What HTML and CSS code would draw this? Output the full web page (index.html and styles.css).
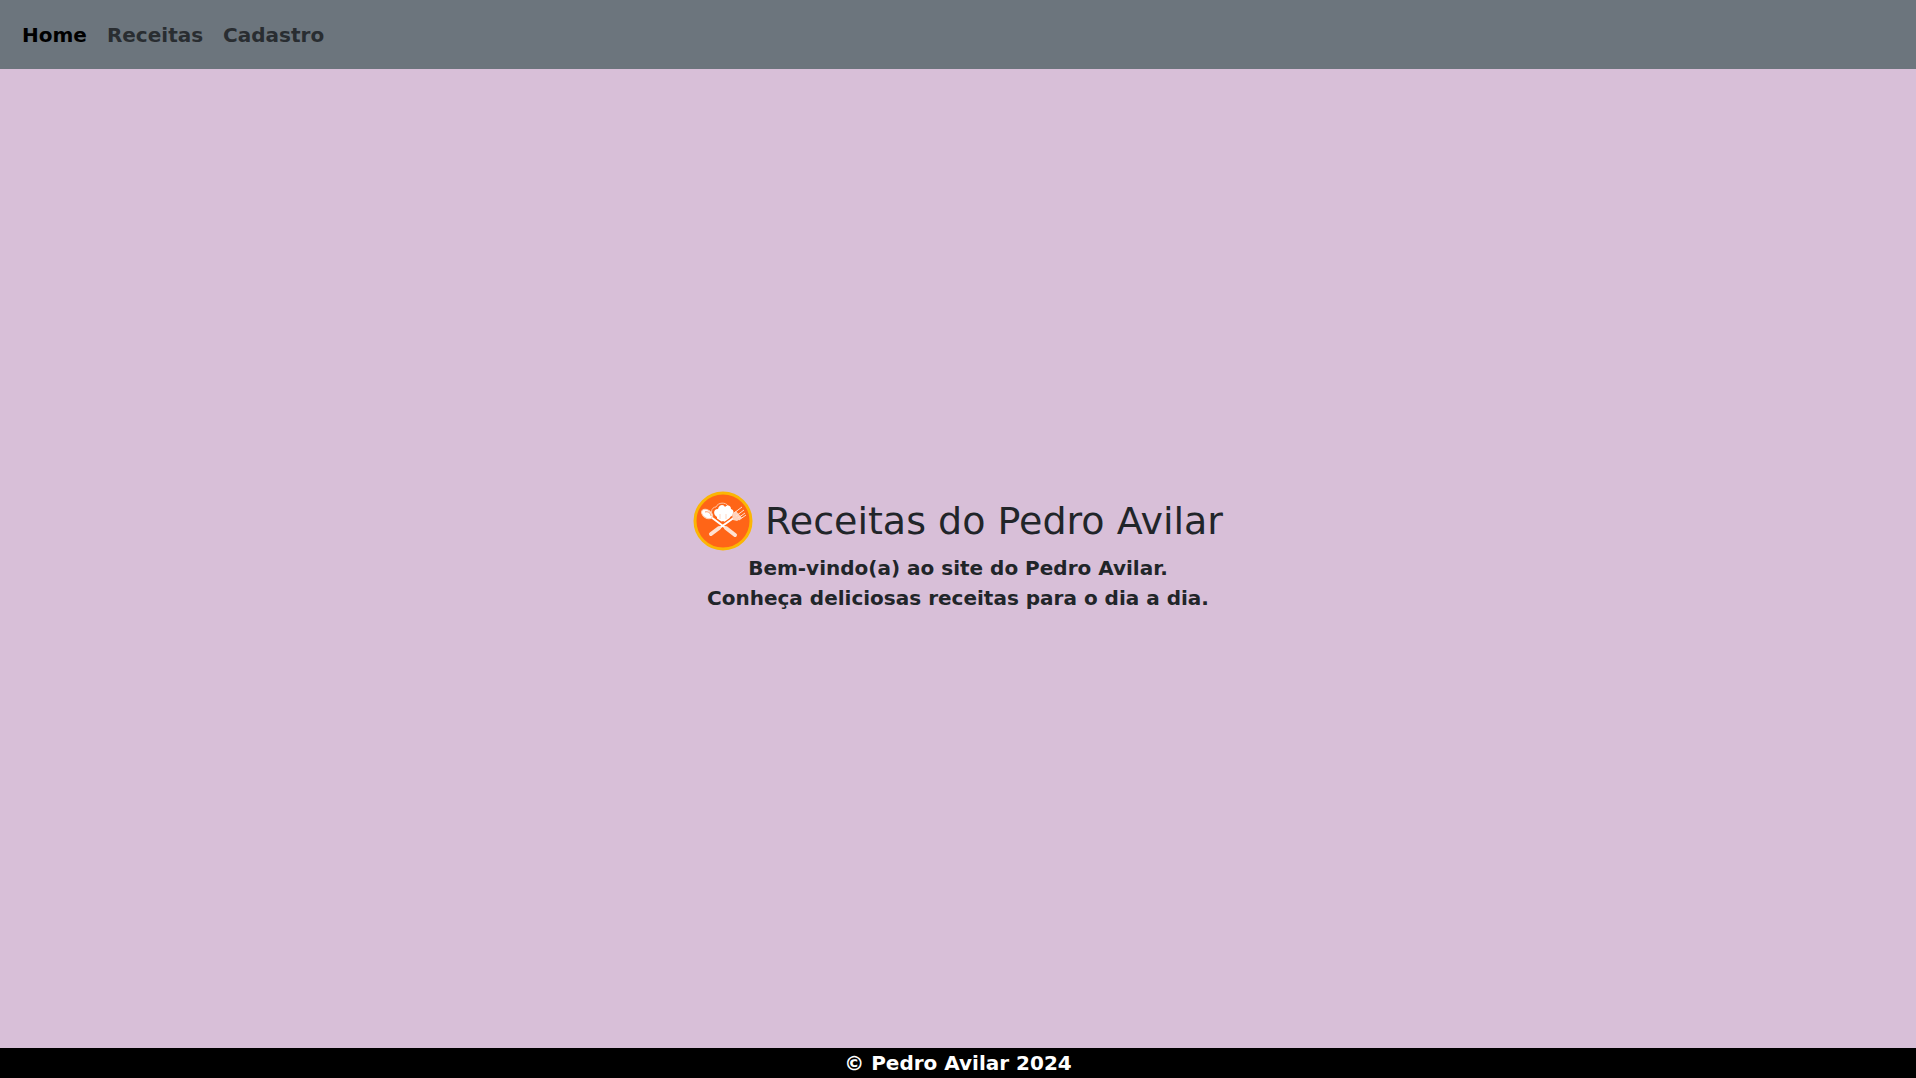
FILE: index.html
```html
<!DOCTYPE html>
<html lang="pt-BR">
<head>
  <meta charset="utf-8">
  <meta name="viewport" content="width=device-width, initial-scale=1">
  <title>Receitas do Pedro Avilar</title>
  <link rel="stylesheet" href="styles.css">
</head>
<body>
  <nav class="navbar">
    <a class="nav-link active" href="#" aria-current="page">Home</a>
    <a class="nav-link" href="#receitas">Receitas</a>
    <a class="nav-link" href="#cadastro">Cadastro</a>
  </nav>
  <main class="hero">
    <h1 class="title">
      <svg class="logo" viewBox="0 0 60 60" aria-hidden="true">
        <circle cx="30" cy="30" r="28" fill="#ff6517" stroke="#fbb604" stroke-width="3"/>
        <!-- Chef hat -->
        <path d="M21 26C17 23 18 16 23 16C25 11 33 11 35 15" fill="none" stroke="#ffc3a3" stroke-width="1"/>
        <path d="M24 33V26C20 24 20 18 25 18C26 13 31 13 32 16C35 13 38 15 38 18C42 19 41 25 37 26L36 33L30 30Z" fill="#fff"/>
        <path d="M27 23V28M33 23V28" stroke="#ffd9c4"/>
        <!-- Crossed handles -->
        <g fill="none" stroke-linecap="round">
          <path d="M20 42L41 27M41 42L19 27" stroke="#ff6517" stroke-width="5"/>
          <path d="M18 43L42 26M42 44L18 26" stroke="#fff" stroke-width="2"/>
          <path d="M18 43L26 37M42 44L33 37" stroke="#ffe1d1" stroke-width="4"/>
        </g>
        <!-- Spoon bowl -->
        <ellipse cx="14" cy="23" rx="6" ry="4" transform="rotate(35 14 23)" fill="#fff" stroke="#ffd0b6"/>
        <path d="M12 21C15 20 18 22 18 25" fill="none" stroke="#ff9a66"/>
        <!-- Fork head -->
        <path d="M39 23L43 20L49 27L44 30L40 29Z" fill="#ffd3bc"/>
        <path d="M41 22L49 16M43 25L51 19M45 27L52 22M46 29L53 24" fill="none" stroke="#ffe1d1" stroke-width="1"/>
      </svg>
      <span>Receitas do Pedro Avilar</span>
    </h1>
    <p class="intro">Bem-vindo(a) ao site do Pedro Avilar.<br>Conheça deliciosas receitas para o dia a dia.</p>
  </main>
  <footer class="footer">© Pedro Avilar 2024</footer>
</body>
</html>
```
FILE: styles.css
```css
* {
  box-sizing: border-box;
}

body {
  display: flex;
  flex-direction: column;
  min-height: 100vh;
  margin: 0;
  background: #d8bfd8;
  color: #212529;
  font-family: Verdana, "DejaVu Sans", sans-serif;
  font-size: 20px;
  font-weight: 700;
  line-height: 30px;
}

.navbar {
  display: flex;
  padding: 12px;
  background: #6c757d;
}

.nav-link {
  padding: 8px 10px 7px;
  color: #292d31;
  text-decoration: none;
}

.nav-link.active {
  color: #000;
}

.hero {
  display: flex;
  flex: 1;
  flex-direction: column;
  align-items: center;
  justify-content: center;
  padding-bottom: 14px;
  text-align: center;
}

.title {
  display: flex;
  align-items: center;
  gap: 12px;
  margin: 0;
  font-size: 38px;
  font-weight: 400;
  line-height: 48px;
}

.logo {
  width: 60px;
  height: 60px;
}

.intro {
  margin: 2px 0 0;
}

.footer {
  background: #000;
  color: #fff;
  text-align: center;
}
```
